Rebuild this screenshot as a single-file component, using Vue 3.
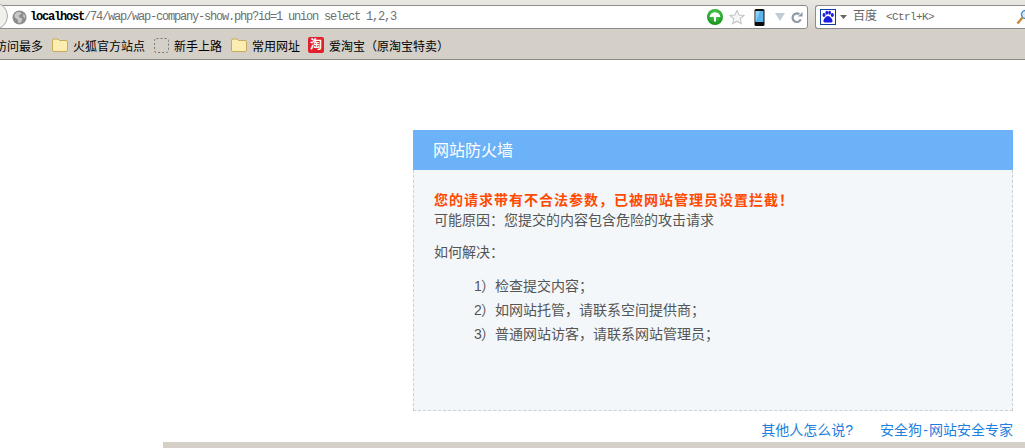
<script setup>
const bookmarks = [
  { label: '火狐官方站点', icon: 'folder' },
  { label: '新手上路', icon: 'dashed' },
  { label: '常用网址', icon: 'folder' },
  { label: '爱淘宝（原淘宝特卖）', icon: 'taobao' }
]
const steps = [
  { n: '1', t: '）检查提交内容；' },
  { n: '2', t: '）如网站托管，请联系空间提供商；' },
  { n: '3', t: '）普通网站访客，请联系网站管理员；' }
]
</script>

<template>
  <div class="page">
    <header class="chrome">
      <div class="navbar">
        <div class="urlbar">
          <div class="backbtn"></div>
          <svg class="globe" width="15" height="15" viewBox="0 0 16 16">
            <circle cx="8" cy="8" r="7.500" fill="#8d8d8d" />
            <path d="M5 2.500 9 2 10 4 7 6 8 8 11 9 10 13 7 14 6 10 3 8 2.500 5Z" fill="#c9c9c9" />
            <path d="M12 4 14 6 14 9 12 7Z" fill="#c9c9c9" />
          </svg>
          <div class="url"><span class="host">localhost</span>/74/wap/wap-company-show.php?id=1 union select 1,2,3</div>
          <div class="url-icons">
            <svg width="16" height="16" viewBox="0 0 16 16">
              <defs>
                <radialGradient id="go" cx="50%" cy="35%" r="70%"><stop offset="0" stop-color="#5fd65f" /><stop offset="1" stop-color="#0b8a12" /></radialGradient>
              </defs>
              <circle cx="8" cy="8" r="8" fill="url(#go)" />
              <path d="M2.500 8Q3.500 3.500 8 3.200 12.500 3.500 13.500 8H9V12.500H7V8Z" fill="#fff" />
            </svg>
            <svg width="16" height="16" viewBox="0 0 18 17">
              <path d="M9 1.200 11.300 6.200 16.800 6.800 12.700 10.500 13.900 16 9 13.200 4.100 16 5.300 10.500 1.200 6.800 6.700 6.200Z" fill="#f6f6f6" stroke="#c4c4c4" stroke-width="1.200" />
            </svg>
            <svg class="phone" width="11" height="17" viewBox="0 0 11 17">
              <rect x=".5" y="0" width="10" height="17" rx="1.500" fill="#0c0c0c" />
              <rect x="1.500" y="2" width="8" height="11" fill="#5ab4ec" />
              <path d="M1.500 2H6L1.500 13Z" fill="#8fd0f5" />
            </svg>
            <svg class="drop" width="10" height="8" viewBox="0 0 10 8"><path d="M0 0H10L5 8Z" fill="#c3cbd3" /></svg>
            <svg class="reload" width="12" height="13" viewBox="0 0 13 13">
              <path d="M10.600 8.500A4.600 4.600 0 1 1 9 3" fill="none" stroke="#8d9aa8" stroke-width="2.400" />
              <path d="M7.500 5.500H12.500V.5Z" fill="#8d9aa8" />
            </svg>
          </div>
        </div>
        <div class="searchbar">
          <svg class="paw" width="16" height="16" viewBox="0 0 16 16">
            <rect x=".5" y=".5" width="15" height="15" fill="#fff" stroke="#0d3fa8" />
            <ellipse cx="4" cy="6" rx="1.500" ry="2" fill="#1c1ce0" />
            <ellipse cx="6.800" cy="3.800" rx="1.400" ry="2" fill="#1c1ce0" />
            <ellipse cx="9.600" cy="3.800" rx="1.400" ry="2" fill="#1c1ce0" />
            <ellipse cx="12.300" cy="6" rx="1.500" ry="2" fill="#1c1ce0" />
            <path d="M8 7C6 7 3 10.500 3.500 12.500 4 14 6.500 13.500 8 13.500S12 14 12.500 12.500C13 10.500 10 7 8 7Z" fill="#1c1ce0" />
          </svg>
          <svg class="caret" width="7" height="4" viewBox="0 0 7 4"><path d="M0 0H7L3.500 4Z" fill="#666" /></svg>
          <span class="search-text">百度<span class="shortcut">&lt;Ctrl+K&gt;</span></span>
          <svg class="lens" width="9" height="17" viewBox="0 0 9 17">
            <circle cx="9.500" cy="5.500" r="4" fill="#d8ecfa" stroke="#4f8fc0" stroke-width="1.500" />
            <path d="M6.500 8.500 1.500 14.500" stroke="#c98a3a" stroke-width="2.500" />
          </svg>
        </div>
      </div>
      <nav class="bookmarks">
        <span class="bm first">访问最多</span>
        <span v-for="b in bookmarks" :key="b.label" class="bm">
          <svg v-if="b.icon === 'folder'" width="16" height="14" viewBox="0 0 16 14">
            <path d="M.5 2.500Q.5 1 2 1H6L7.500 2.500H14Q15.500 2.500 15.500 4V12Q15.500 13.500 14 13.500H2Q.5 13.500 .5 12Z" fill="#fbeeb0" stroke="#c9aa5a" />
          </svg>
          <svg v-else-if="b.icon === 'dashed'" width="15" height="15" viewBox="0 0 15 15">
            <rect x=".5" y=".5" width="14" height="14" rx="2" fill="none" stroke="#777" stroke-dasharray="2 2" />
          </svg>
          <span v-else class="tao">淘</span>
          {{ b.label }}
        </span>
      </nav>
    </header>

    <main class="main">
      <section class="panel">
        <h1 class="panel-title">网站防火墙</h1>
        <div class="panel-body">
          <p class="warn">您的请求带有不合法参数，已被网站管理员设置拦截！</p>
          <p class="reason">可能原因：您提交的内容包含危险的攻击请求</p>
          <p class="how">如何解决：</p>
          <ul class="steps">
            <li v-for="s in steps" :key="s.n"><span class="num">{{ s.n }}</span>{{ s.t }}</li>
          </ul>
        </div>
        <div class="links">
          <a>其他人怎么说?</a>
          <a>安全狗<span class="dash">-</span>网站安全专家</a>
        </div>
      </section>
    </main>
    <div class="strip"></div>
  </div>
</template>

<style>
html, body { margin: 0; overflow: hidden; background: #fff; }
</style>

<style scoped>
.page {
  width: 1025px;
  height: 448px;
  overflow: hidden;
  font-family: "Liberation Sans", "Noto Sans CJK SC", sans-serif;
  display: flex;
  flex-direction: column;
}
.chrome {
  height: 60px;
  box-sizing: border-box;
  background: #d4d0c8;
  border-bottom: 1px solid #8a8a84;
  display: flex;
  flex-direction: column;
}
.navbar {
  height: 29px;
  box-sizing: border-box;
  padding-top: 5px;
  background: linear-gradient(#e9e7e2, #d6d2ca);
  display: flex;
  gap: 7px;
}
.urlbar {
  width: 809px;
  flex: none;
  height: 24px;
  margin-left: -1px;
  box-sizing: border-box;
  background: #fff;
  border: 1px solid #8c8c8c;
  border-radius: 0 3px 3px 0;
  display: flex;
  align-items: center;
  position: relative;
  padding-left: 12px;
}
.backbtn {
  position: absolute;
  left: -20px;
  top: -4px;
  width: 26px;
  height: 26px;
  border-radius: 50%;
  background: #f1f0ed;
  border: 1px solid #aaa;
}
.globe { position: relative; flex: none; }
.url {
  margin-left: 3px;
  font-family: "Liberation Mono", monospace;
  font-size: 12px;
  letter-spacing: -1.2px;
  color: #6f6f6f;
  white-space: nowrap;
  flex: 1;
}
.host { color: #000; font-weight: bold; }
.url-icons {
  display: flex;
  align-items: center;
  padding-right: 4px;
  gap: 6px;
}
.url-icons svg { display: block; }
.phone { margin-left: 3px; }
.drop { margin-left: 4px; }
.searchbar {
  flex: 1;
  min-width: 0;
  height: 24px;
  box-sizing: border-box;
  background: #fff;
  border: 1px solid #8c8c8c;
  border-radius: 3px 0 0 3px;
  border-right: 0;
  display: flex;
  align-items: center;
  padding-left: 4px;
  gap: 4px;
}
.search-text { font-size: 12px; line-height: 16px; color: #666; margin: 0 0 2px 2px; white-space: nowrap; flex: 1; }
.shortcut { font-family: "Liberation Mono", monospace; font-size: 11px; margin-left: 9px; letter-spacing: -0.6px; }
.lens { flex: none; }
.bookmarks {
  flex: 1;
  display: flex;
  align-items: center;
  margin-left: -5px;
  padding-top: 2px;
  gap: 9px;
  font-size: 12px;
  color: #000;
  white-space: nowrap;
}
.bm { display: flex; align-items: center; gap: 5px; }
.tao {
  width: 16px;
  height: 16px;
  margin-left: -1px;
  background: #e0202c;
  color: #fff;
  font-size: 12px;
  line-height: 16px;
  text-align: center;
  border-radius: 2px;
  font-weight: bold;
}
.main { flex: 1; padding: 70px 12px 0 413px; }
.panel { width: 600px; }
.panel-title {
  margin: 0;
  height: 40px;
  padding-left: 20px;
  background: #6cb2f8;
  color: #fff;
  font-size: 16px;
  font-weight: normal;
  line-height: 41px;
}
.panel-body {
  height: 241px;
  box-sizing: border-box;
  background: #f3f7fa;
  border: 1px dashed #cfcfcf;
  border-top: 0;
  padding: 20px 20px 0;
  font-size: 14px;
  color: #555;
}
.panel-body p { margin: 0; }
.warn { color: #ff4a00; font-weight: bold; line-height: 20px; letter-spacing: 1px; }
.reason { line-height: 20px; }
.how { margin-top: 12px !important; line-height: 20px; }
.steps {
  list-style: none;
  margin: 12px 0 0;
  padding: 0 0 0 40px;
  line-height: 24px;
}
.num { display: inline-block; width: 7px; }
.links {
  display: flex;
  justify-content: flex-end;
  gap: 27px;
  padding-top: 9px;
  font-size: 14px;
  line-height: 20px;
}
.links a { color: #1b80e0; }
.dash { display: inline-block; width: 7px; text-align: center; }
.strip {
  height: 6px;
  margin-left: 163px;
  background: #d4d0c8;
  flex: none;
}
</style>
